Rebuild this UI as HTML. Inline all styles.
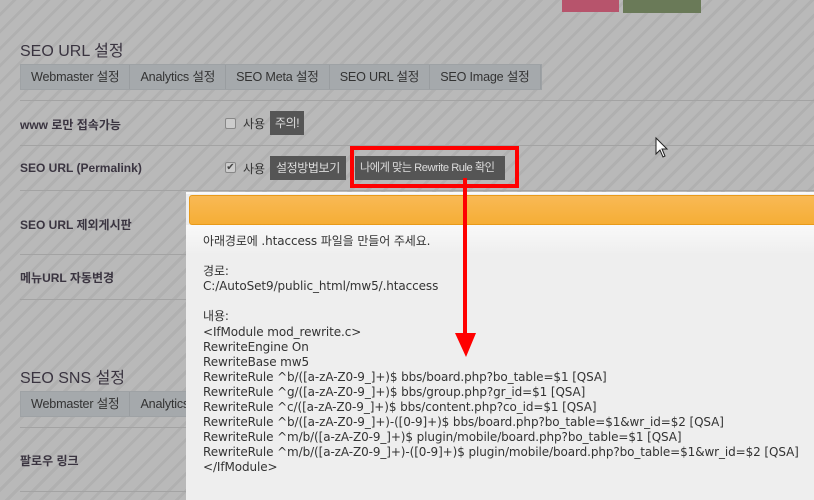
<!DOCTYPE html>
<html><head><meta charset="utf-8"><style>
*{margin:0;padding:0;box-sizing:border-box}
html,body{width:814px;height:500px;overflow:hidden}
body{position:relative;font-family:"Liberation Sans","Noto Sans CJK KR",sans-serif;
background:#b7b7b7;background-image:repeating-linear-gradient(135deg,#b9b9b9 0 9px,#b0b0b0 9px 12px);}
.a{position:absolute}
.h{font-size:16px;color:#3a3440;}
.tabs{position:absolute;left:20px;height:26px;background:#a5a9ac;border:1px solid #9ea2a5;display:flex}
.tabs div{padding:0 10px;line-height:24px;font-size:12.6px;color:#333;border-right:1px solid #999da0;letter-spacing:-0.2px;white-space:nowrap}
.line{position:absolute;left:20px;width:794px;height:1px;background:#a3a3a3}
.lab{position:absolute;left:20px;font-size:12px;font-weight:bold;color:#3a3440}
.btn{position:absolute;background:#555;color:#ddd;font-size:12px;line-height:24px;padding:0 6px;height:24px;white-space:nowrap;letter-spacing:-0.4px}
.cb{position:absolute;width:11px;height:11px;border:1px solid #888;background:#ccc;border-radius:2px;font-size:10px;line-height:9px;color:#444;text-align:center}
.dlg{position:absolute;left:186px;top:192px;width:640px;height:310px;background:#eee;border-top:2px solid #fafafa;}
.dh{position:absolute;left:189px;top:195px;width:640px;height:30px;background:linear-gradient(#f8b955,#f6ae36);border:1px solid #e89a1a;border-radius:3px 0 0 3px}
.dt{position:absolute;left:203px;top:234px;font-size:12px;line-height:15.1px;color:#333;white-space:pre;font-family:"DejaVu Sans","Noto Sans CJK KR",sans-serif;letter-spacing:-0.1px}
</style></head><body>
<div class="a" style="left:562px;top:0;width:57px;height:12px;background:#b7546c"></div>
<div class="a" style="left:623px;top:0;width:78px;height:13px;background:#6a7a58"></div>

<div class="a h" style="left:20px;top:37px">SEO URL 설정</div>
<div class="tabs" style="top:64px"><div>Webmaster 설정</div><div>Analytics 설정</div><div>SEO Meta 설정</div><div>SEO URL 설정</div><div>SEO Image 설정</div></div>
<div class="line" style="top:100px"></div>
<div class="lab" style="top:116px">www 로만 접속가능</div>
<div class="cb" style="left:225px;top:118px"></div>
<div class="a" style="left:243px;top:115px;font-size:12px;color:#333">사용</div>
<div class="btn" style="left:270px;top:111px;padding:0 5px">주의!</div>
<div class="line" style="top:145px"></div>
<div class="lab" style="top:161px">SEO URL (Permalink)</div>
<div class="cb" style="left:225px;top:162px">✔</div>
<div class="a" style="left:243px;top:160px;font-size:12px;color:#333">사용</div>
<div class="btn" style="left:270px;top:156px">설정방법보기</div>
<div class="btn" style="left:355px;top:156px;width:150px;padding:0 5px;font-size:11.2px;letter-spacing:-0.5px">나에게 맞는 Rewrite Rule 확인</div>
<div class="line" style="top:190px"></div>
<div class="lab" style="top:216px">SEO URL 제외게시판</div>
<div class="line" style="top:254px"></div>
<div class="lab" style="top:269px">메뉴URL 자동변경</div>
<div class="line" style="top:299px"></div>
<div class="a h" style="left:20px;top:364px">SEO SNS 설정</div>
<div class="tabs" style="top:391px"><div>Webmaster 설정</div><div>Analytics 설정</div></div>
<div class="line" style="top:427px"></div>
<div class="lab" style="top:452px">팔로우 링크</div>
<div class="line" style="top:491px"></div>

<div class="dlg"></div>
<div class="a" style="left:186px;top:225px;width:640px;height:30px;background:linear-gradient(#f9f9f9,#eee)"></div>
<div class="dh"></div>
<div class="dt">아래경로에 .htaccess 파일을 만들어 주세요.

경로:
C:/AutoSet9/public_html/mw5/.htaccess

내용:
&lt;IfModule mod_rewrite.c&gt;
RewriteEngine On
RewriteBase mw5
RewriteRule ^b/([a-zA-Z0-9_]+)$ bbs/board.php?bo_table=$1 [QSA]
RewriteRule ^g/([a-zA-Z0-9_]+)$ bbs/group.php?gr_id=$1 [QSA]
RewriteRule ^c/([a-zA-Z0-9_]+)$ bbs/content.php?co_id=$1 [QSA]
RewriteRule ^b/([a-zA-Z0-9_]+)-([0-9]+)$ bbs/board.php?bo_table=$1&amp;wr_id=$2 [QSA]
RewriteRule ^m/b/([a-zA-Z0-9_]+)$ plugin/mobile/board.php?bo_table=$1 [QSA]
RewriteRule ^m/b/([a-zA-Z0-9_]+)-([0-9]+)$ plugin/mobile/board.php?bo_table=$1&amp;wr_id=$2 [QSA]
&lt;/IfModule&gt;</div>

<svg class="a" style="left:0;top:0" width="814" height="500">
<rect x="352" y="148" width="165" height="38" fill="none" stroke="#f00" stroke-width="4"/>
<line x1="465" y1="178" x2="465" y2="336" stroke="#f00" stroke-width="4"/>
<polygon points="455,333 476,333 466,357" fill="#f00"/>
<path d="M656,138 L656,154 L660,150 L663,157 L665,156 L662,149 L667,149 Z" fill="#fff" stroke="#222" stroke-width="1"/>
</svg>
</body></html>
